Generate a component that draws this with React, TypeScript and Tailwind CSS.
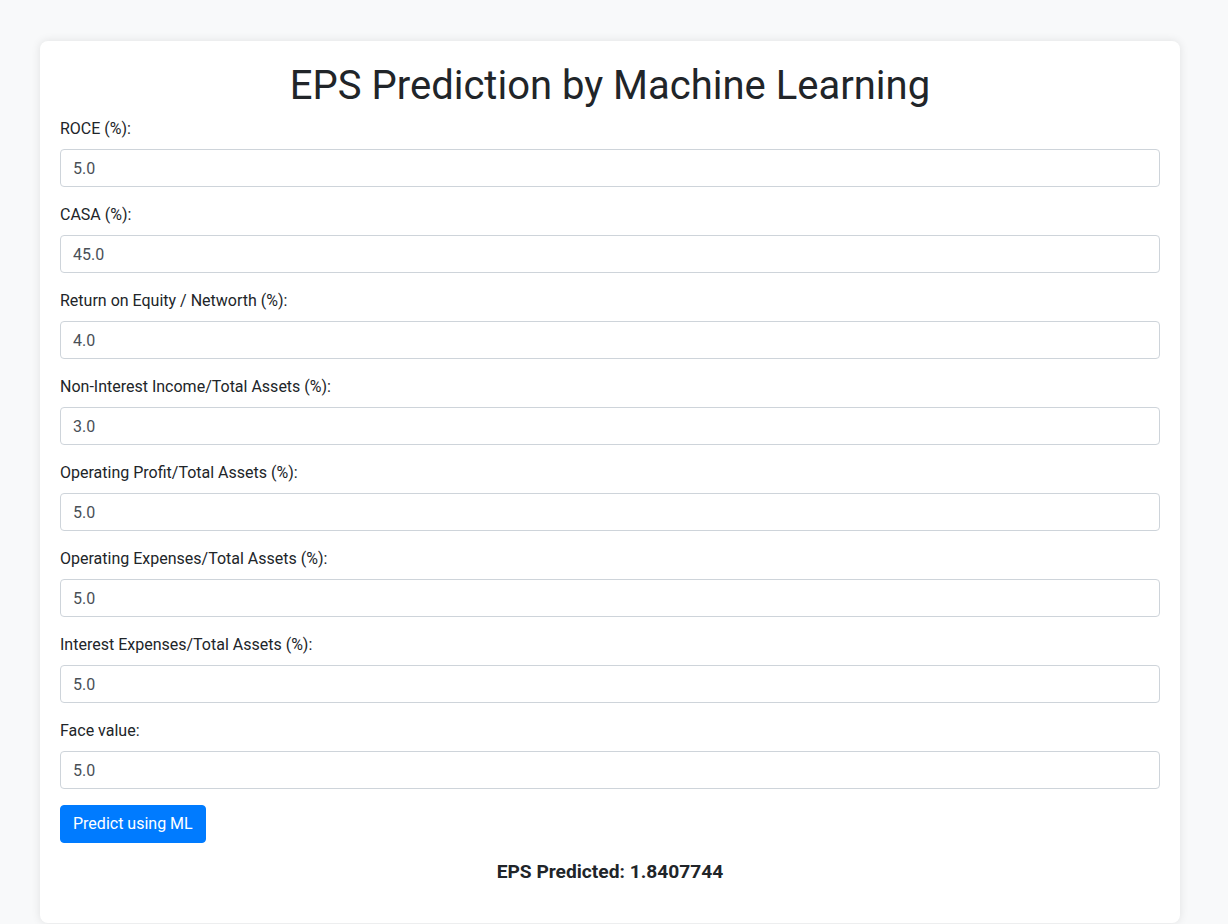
import { useState } from 'react';

interface Field {
  id: string;
  label: string;
  value: string;
}

const initialFields: Field[] = [
  { id: 'roce', label: 'ROCE (%):', value: '5.0' },
  { id: 'casa', label: 'CASA (%):', value: '45.0' },
  { id: 'roe', label: 'Return on Equity / Networth (%):', value: '4.0' },
  { id: 'nii', label: 'Non-Interest Income/Total Assets (%):', value: '3.0' },
  { id: 'op', label: 'Operating Profit/Total Assets (%):', value: '5.0' },
  { id: 'opex', label: 'Operating Expenses/Total Assets (%):', value: '5.0' },
  { id: 'intexp', label: 'Interest Expenses/Total Assets (%):', value: '5.0' },
  { id: 'face', label: 'Face value:', value: '5.0' },
];

export default function App() {
  const [fields, setFields] = useState<Field[]>(initialFields);

  const update = (id: string, value: string) =>
    setFields((prev) => prev.map((f) => (f.id === id ? { ...f, value } : f)));

  return (
    <div className="min-h-screen bg-[#f8f9fa] pt-[41px] font-['Roboto',sans-serif] text-[#212529]">
      <div className="ml-[40px] w-[1140px] rounded-lg bg-white px-5 pt-5 pb-10 shadow-[0_0_10px_rgba(0,0,0,0.1)]">
        <h1 className="mb-[7px] pt-px text-center text-[40px] font-normal leading-[48px]">
          EPS Prediction by Machine Learning
        </h1>

        <form onSubmit={(e) => e.preventDefault()}>
          {fields.map((f) => (
            <div key={f.id} className="mb-4">
              <label htmlFor={f.id} className="mb-2 block text-base leading-6">
                {f.label}
              </label>
              <input
                id={f.id}
                type="text"
                value={f.value}
                onChange={(e) => update(f.id, e.target.value)}
                className="block h-[38px] w-full rounded border border-[#ced4da] bg-white px-3 text-base text-[#495057] outline-none"
              />
            </div>
          ))}

          <button
            type="submit"
            className="h-[38px] rounded border border-[#007bff] bg-[#007bff] px-3 text-base leading-6 text-white"
          >
            Predict using ML
          </button>
        </form>

        <div className="mt-[17px] text-center text-[19.2px] font-bold leading-[23px]">
          EPS Predicted: 1.8407744
        </div>
      </div>
    </div>
  );
}
